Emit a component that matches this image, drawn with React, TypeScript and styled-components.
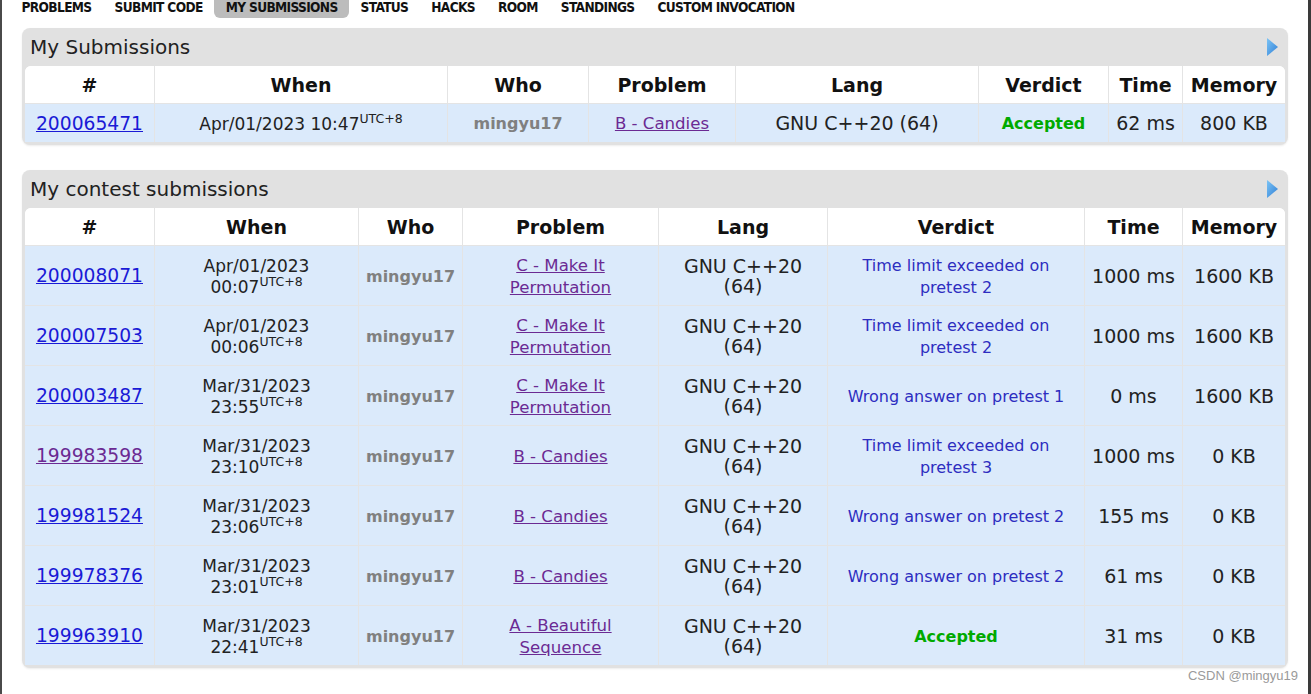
import React from 'react';
import styled, { createGlobalStyle } from 'styled-components';

const GlobalStyle = createGlobalStyle`
  html, body {
    margin: 0;
    padding: 0;
    background: #fff;
  }
  body {
    font-family: "DejaVu Sans", Verdana, sans-serif;
    color: #222;
    overflow: hidden;
  }
`;

const Frame = styled.div`
  display: flex;
  height: 694px;
  border-left: 2px solid #4a4a4a;
  border-right: 3px solid #3a3a3a;
  box-sizing: border-box;
  overflow: hidden;
`;

const Page = styled.div`
  flex: 1;
  display: flex;
  flex-direction: column;
  padding-left: 20px;
  padding-right: 18px;
`;

const Menu = styled.ul`
  display: flex;
  list-style: none;
  margin: -4px 0 0 -12px;
  padding: 0;
  height: 22px;
`;

const MenuItem = styled.li<{ $active?: boolean }>`
  font-family: "Liberation Sans Narrow", "DejaVu Sans Condensed", "Liberation Sans", sans-serif;
  font-stretch: condensed;
  font-weight: 700;
  font-size: 13.6px;
  line-height: 18px;
  padding: 2px 11.5px 2px 11.5px;
  color: #111;
  border-radius: 0 0 6px 6px;
  background: ${(p) => (p.$active ? '#bcbcbc' : 'transparent')};
  letter-spacing: -0.65px;
  white-space: nowrap;
`;

const Panel = styled.section<{ $top: number }>`
  background: #e1e1e1;
  border-radius: 8px;
  padding: 0 3px 3px 3px;
  width: 1266px;
  box-sizing: border-box;
  box-shadow: 0 1px 2px rgba(0, 0, 0, 0.08);
  margin-top: ${(p) => p.$top}px;
`;

const Caption = styled.div`
  display: flex;
  align-items: center;
  justify-content: space-between;
  height: 38px;
  padding: 0 7px 0 5px;
  font-size: 20px;
  color: #222;
`;

const Table = styled.table`
  width: 1260px;
  table-layout: fixed;
  border-collapse: separate;
  border-spacing: 0;
  background: #fff;
  border-radius: 6px 6px 0 0;
  overflow: hidden;
  font-size: 19px;
`;

const Head = styled.th`
  height: 37px;
  padding: 0;
  font-weight: 700;
  font-size: 19px;
  color: #111;
  text-align: center;
  background: #fff;
  border-left: 1px solid #e4e4e4;
  border-bottom: 1px solid #e4e4e4;
  &:first-child {
    border-left: none;
  }
`;

const Cell = styled.td<{ $h: number }>`
  height: ${(p) => p.$h}px;
  padding: 0 4px;
  text-align: center;
  vertical-align: middle;
  background: #dbeafb;
  border-left: 1px solid #e4e4e4;
  border-top: 1px solid #e4e4e4;
  line-height: 20px;
  color: #222;
  tr:first-child > & {
    border-top: none;
  }
  &:first-child {
    border-left: none;
  }
`;

const IdLink = styled.a<{ $visited?: boolean }>`
  color: ${(p) => (p.$visited ? '#6b2a93' : '#1a1ad6')};
  text-decoration: underline;
  font-size: 18.7px;
`;

const ProblemLink = styled.a`
  color: #6b2a93;
  text-decoration: underline;
  font-size: 16.6px;
`;

const Who = styled.span`
  font-weight: 700;
  font-size: 16px;
  color: #808080;
`;

const Utc = styled.sup`
  font-size: 12.5px;
  vertical-align: 7px;
  line-height: 0;
`;

const When = styled.span`
  font-size: 17px;
`;

const Verdict = styled.span<{ $ok?: boolean }>`
  font-size: 16px;
  color: ${(p) => (p.$ok ? '#0a0' : '#2d2dc0')};
  font-weight: ${(p) => (p.$ok ? 700 : 400)};
`;

const Col = styled.col<{ $w: number }>`
  width: ${(p) => p.$w}px;
`;

const Watermark = styled.div`
  align-self: flex-end;
  margin-top: 0;
  margin-right: -8px;
  font-family: "Liberation Sans", Arial, sans-serif;
  font-size: 13px;
  color: #9a9a9a;
`;

const Arrow = () => (
  <svg width="11" height="18" viewBox="0 0 11 18">
    <defs>
      <linearGradient id="arr" x1="0" y1="0" x2="1" y2="1">
        <stop offset="0" stopColor="#7cc4f5" />
        <stop offset="1" stopColor="#2f7fd6" />
      </linearGradient>
    </defs>
    <path d="M0 0 L11 9 L0 18 Z" fill="url(#arr)" />
  </svg>
);

const menu = ['PROBLEMS', 'SUBMIT CODE', 'MY SUBMISSIONS', 'STATUS', 'HACKS', 'ROOM', 'STANDINGS', 'CUSTOM INVOCATION'];

const heads = ['#', 'When', 'Who', 'Problem', 'Lang', 'Verdict', 'Time', 'Memory'];

type Sub = {
  id: string;
  visited?: boolean;
  date: string;
  time: string;
  problem: string;
  verdict: string;
  ok?: boolean;
  ms: string;
  mem: string;
};

const contest: Sub[] = [
  { id: '200008071', date: 'Apr/01/2023', time: '00:07', problem: 'C - Make It Permutation', verdict: 'Time limit exceeded on pretest 2', ms: '1000 ms', mem: '1600 KB' },
  { id: '200007503', date: 'Apr/01/2023', time: '00:06', problem: 'C - Make It Permutation', verdict: 'Time limit exceeded on pretest 2', ms: '1000 ms', mem: '1600 KB' },
  { id: '200003487', date: 'Mar/31/2023', time: '23:55', problem: 'C - Make It Permutation', verdict: 'Wrong answer on pretest 1', ms: '0 ms', mem: '1600 KB' },
  { id: '199983598', visited: true, date: 'Mar/31/2023', time: '23:10', problem: 'B - Candies', verdict: 'Time limit exceeded on pretest 3', ms: '1000 ms', mem: '0 KB' },
  { id: '199981524', date: 'Mar/31/2023', time: '23:06', problem: 'B - Candies', verdict: 'Wrong answer on pretest 2', ms: '155 ms', mem: '0 KB' },
  { id: '199978376', date: 'Mar/31/2023', time: '23:01', problem: 'B - Candies', verdict: 'Wrong answer on pretest 2', ms: '61 ms', mem: '0 KB' },
  { id: '199963910', date: 'Mar/31/2023', time: '22:41', problem: 'A - Beautiful Sequence', verdict: 'Accepted', ok: true, ms: '31 ms', mem: '0 KB' },
];

const mineCols = [129, 293, 141, 147, 243, 130, 74, 103];
const contestCols = [129, 204, 104, 196, 169, 257, 98, 103];

const VerdictCell = ({ s }: { s: Sub }) => {
  if (s.ok) return <Verdict $ok>{s.verdict}</Verdict>;
  if (s.verdict.startsWith('Time')) {
    const rest = s.verdict.replace('Time limit exceeded on ', '');
    return (
      <Verdict>
        Time limit exceeded on
        <br />
        {rest}
      </Verdict>
    );
  }
  return <Verdict>{s.verdict}</Verdict>;
};

const ProblemCell = ({ name }: { name: string }) => {
  if (name.startsWith('C - ')) {
    return (
      <ProblemLink>
        C - Make It
        <br />
        Permutation
      </ProblemLink>
    );
  }
  if (name.startsWith('A - ')) {
    return (
      <ProblemLink>
        A - Beautiful
        <br />
        Sequence
      </ProblemLink>
    );
  }
  return <ProblemLink>{name}</ProblemLink>;
};

export default function App() {
  return (
    <Frame>
      <GlobalStyle />
      <Page>
        <Menu>
          {menu.map((m) => (
            <MenuItem key={m} $active={m === 'MY SUBMISSIONS'}>
              {m}
            </MenuItem>
          ))}
        </Menu>

        <Panel $top={10}>
          <Caption>
            My Submissions
            <Arrow />
          </Caption>
          <Table>
            <colgroup>
              {mineCols.map((w, i) => (
                <Col key={i} $w={w} />
              ))}
            </colgroup>
            <thead>
              <tr>
                {heads.map((h) => (
                  <Head key={h}>{h}</Head>
                ))}
              </tr>
            </thead>
            <tbody>
              <tr>
                <Cell $h={38}>
                  <IdLink>200065471</IdLink>
                </Cell>
                <Cell $h={38}>
                  <When>
                    Apr/01/2023 10:47<Utc>UTC+8</Utc>
                  </When>
                </Cell>
                <Cell $h={38}>
                  <Who>mingyu17</Who>
                </Cell>
                <Cell $h={38}>
                  <ProblemLink>B - Candies</ProblemLink>
                </Cell>
                <Cell $h={38}>GNU C++20 (64)</Cell>
                <Cell $h={38}>
                  <Verdict $ok>Accepted</Verdict>
                </Cell>
                <Cell $h={38}>62 ms</Cell>
                <Cell $h={38}>800 KB</Cell>
              </tr>
            </tbody>
          </Table>
        </Panel>

        <Panel $top={25}>
          <Caption>
            My contest submissions
            <Arrow />
          </Caption>
          <Table>
            <colgroup>
              {contestCols.map((w, i) => (
                <Col key={i} $w={w} />
              ))}
            </colgroup>
            <thead>
              <tr>
                {heads.map((h) => (
                  <Head key={h}>{h}</Head>
                ))}
              </tr>
            </thead>
            <tbody>
              {contest.map((s) => (
                <tr key={s.id}>
                  <Cell $h={59}>
                    <IdLink $visited={s.visited}>{s.id}</IdLink>
                  </Cell>
                  <Cell $h={59}>
                    <When>
                      {s.date}
                      <br />
                      {s.time}
                      <Utc>UTC+8</Utc>
                    </When>
                  </Cell>
                  <Cell $h={59}>
                    <Who>mingyu17</Who>
                  </Cell>
                  <Cell $h={59}>
                    <ProblemCell name={s.problem} />
                  </Cell>
                  <Cell $h={59}>
                    GNU C++20
                    <br />
                    (64)
                  </Cell>
                  <Cell $h={59}>
                    <VerdictCell s={s} />
                  </Cell>
                  <Cell $h={59}>{s.ms}</Cell>
                  <Cell $h={59}>{s.mem}</Cell>
                </tr>
              ))}
            </tbody>
          </Table>
        </Panel>
        <Watermark>CSDN @mingyu19</Watermark>
      </Page>
    </Frame>
  );
}
